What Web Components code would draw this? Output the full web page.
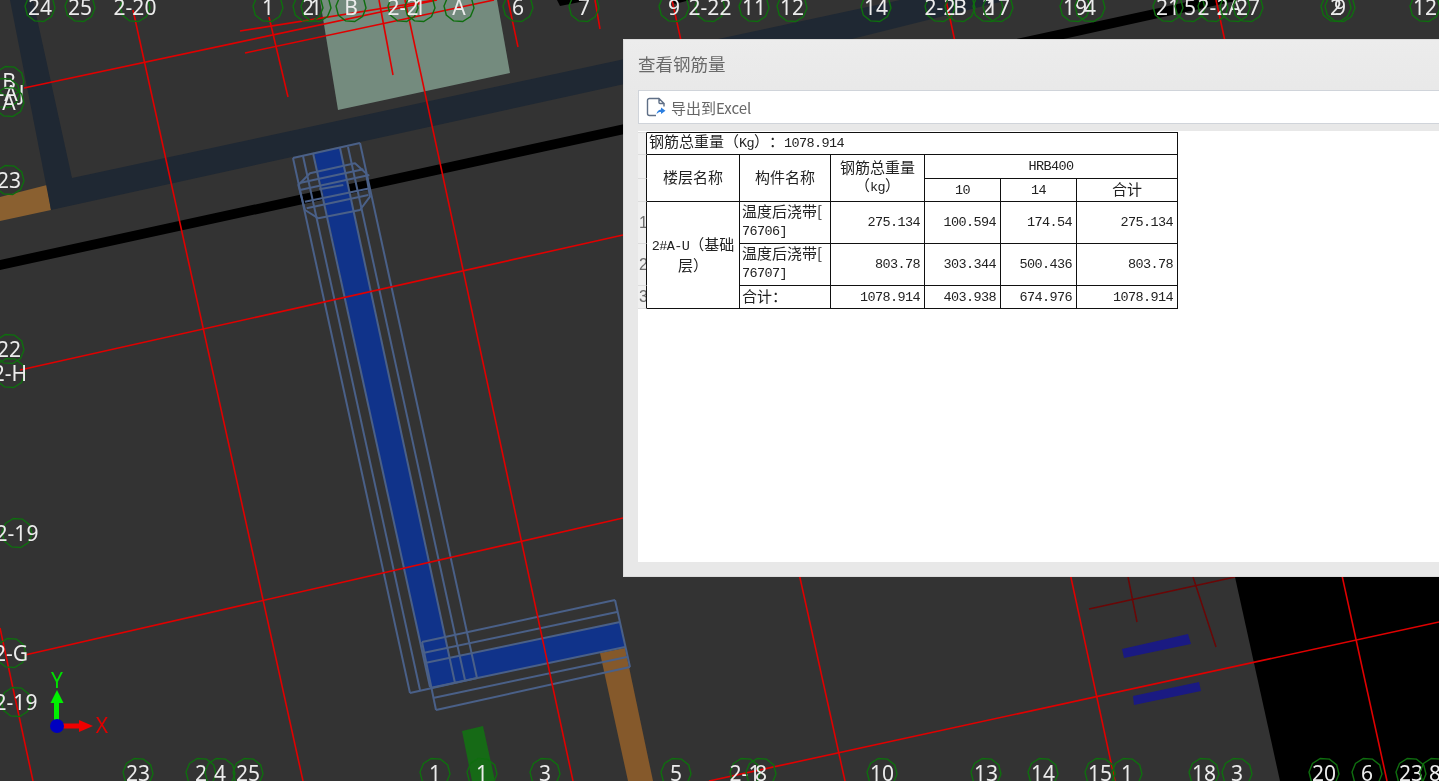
<!DOCTYPE html>
<html lang="zh">
<head>
<meta charset="utf-8">
<title>查看钢筋量</title>
<style>
    html, body { margin: 0; height: 100%; overflow: hidden; background: #333; }
</style>
</head>
<body>
<cad-view>
    <rebar-dialog heading="查看钢筋量">
        <export-button slot="toolbar">导出到Excel</export-button>
        <rebar-table></rebar-table>
    </rebar-dialog>
</cad-view>

<script>
const axisTagTemplate = document.createElement('template');
axisTagTemplate.innerHTML = `
    <style>
        :host {
            position: absolute;
            display: flex;
            align-items: center;
            justify-content: center;
            width: 30px;
            height: 30px;
            margin: -15px 0 0 -15px;
            color: #ececec;
            font: 21px/30px "Noto Sans", sans-serif;
            white-space: nowrap;
        }
        svg {
            position: absolute;
            inset: -1px;
            width: 32px;
            height: 32px;
        }
        span { position: relative; margin-top: -1px; }
    </style>
    <svg viewBox="-16 -16 32 32"><polygon fill="none" stroke="#0f6e0f" stroke-width="1.4"></polygon></svg>
    <span><slot></slot></span>
`;

class AxisTag extends HTMLElement {
    constructor() {
        super();
        this.attachShadow({ mode: 'open' });
        this.shadowRoot.appendChild(axisTagTemplate.content.cloneNode(true));
        const pts = [];
        for (let i = 0; i < 10; i++) {
            const a = (i + 0.5) * Math.PI / 5 - 0.25;
            pts.push((15 * Math.cos(a)).toFixed(1) + ',' + (15 * Math.sin(a)).toFixed(1));
        }
        this.shadowRoot.querySelector('polygon').setAttribute('points', pts.join(' '));
    }

    connectedCallback() {
        this.style.left = this.getAttribute('x') + 'px';
        this.style.top = this.getAttribute('y') + 'px';
    }
}
customElements.define('axis-tag', AxisTag);

const line = (x1, y1, x2, y2) => `<line x1="${x1}" y1="${y1}" x2="${x2}" y2="${y2}"/>`;

const redLines = [
    [133, 10, 303, 781], [0, 628, 33, 781], [405, 0, 573, 781], [672, 0, 845, 781],
    [946, 0, 1115, 781], [1216, 0, 1387, 781], [508, 0, 518, 47], [595, 0, 600, 29],
    [269, 17, 288, 97], [379, 0, 393, 75],
    [240, 31, 435, 0], [24, 88, 437, 0], [245, 53, 494, 0],
    [20, 370, 623, 235], [25, 655, 623, 518], [709, 781, 1439, 622]
].map(p => line(...p)).join('');

const dimLines = [
    [1089, 609, 1235, 577], [1128, 577, 1137, 622], [1193, 577, 1216, 647]
].map(p => line(...p)).join('');

const wireLines = [
    [293, 158, 360, 143], [293, 158, 410, 693], [303, 156, 420, 690], [313, 153, 430, 687],
    [340, 148, 455, 683], [348, 147, 465, 680], [360, 143, 477, 678], [410, 693, 477, 678],
    [422, 642, 615, 600], [423, 653, 617, 612], [425, 663, 620, 622], [430, 688, 625, 647],
    [433, 698, 627, 657], [436, 710, 630, 667], [615, 600, 630, 667], [422, 642, 436, 710]
].map(p => line(...p)).join('');

// cap rings round the top of the column, drawn in 3x crop units
const capLines = [
    [62, 158, 250, 118], [60, 180, 268, 135], [118, 178, 190, 165], [75, 215, 270, 175], [80, 235, 265, 195]
].map(p => line(...p)).join('');

const axisTags = [
    ['24', 40, 7], ['25', 80, 7], ['2-20', 135, 7], ['1', 268, 7], ['2', 308, 7], ['1', 316, 7],
    ['B', 351, 7], ['2-2', 403, 7], ['1', 420, 7], ['A', 459, 7], ['6', 518, 7], ['7', 584, 7],
    ['9', 674, 7], ['2-22', 710, 7], ['11', 754, 7], ['12', 792, 7], ['14', 876, 7], ['2-2', 940, 7],
    ['B', 960, 7], ['2', 988, 7], ['17', 998, 7], ['19', 1075, 7], ['4', 1090, 7], ['21', 1168, 7],
    ['5', 1190, 7], ['2-2', 1213, 7], ['A', 1235, 7], ['27', 1248, 7], ['2', 1336, 7], ['9', 1340, 7],
    ['12', 1425, 7],
    ['B', 9, 81], ['2-AJ', 5, 93], ['A', 9, 102], ['23', 9, 180], ['22', 9, 349], ['2-H', 10, 373],
    ['2-19', 17, 533], ['2-G', 11, 653], ['2-19', 16, 702],
    ['23', 138, 773], ['2', 201, 773], ['4', 220, 773], ['25', 248, 773], ['1', 435, 773],
    ['1', 482, 773], ['3', 545, 773], ['5', 676, 773], ['2-1', 745, 773], ['8', 761, 773],
    ['10', 882, 773], ['13', 986, 773], ['14', 1043, 773], ['15', 1100, 773], ['1', 1127, 773],
    ['18', 1204, 773], ['3', 1237, 773], ['20', 1324, 773], ['6', 1367, 773], ['23', 1411, 773],
    ['8', 1435, 773]
];

const cadViewTemplate = document.createElement('template');
cadViewTemplate.innerHTML = `
    <style>
        :host {
            position: absolute;
            inset: 0;
            display: block;
            overflow: hidden;
            background: #333;
        }
        svg.plan {
            position: absolute;
            inset: 0;
            width: 100%;
            height: 100%;
            filter: blur(.35px);
        }
        .tags { filter: blur(.35px); }
        .red { stroke: #e00000; stroke-width: 1.6; }
        .dim { stroke: #6b0606; stroke-width: 1.5; }
        .wire { stroke: #4a6088; stroke-width: 2; fill: none; stroke-linejoin: round; }
        text { font: 21px "Noto Sans", sans-serif; }
    </style>
    <svg class="plan" viewBox="0 0 1439 781">
        <polygon points="1235,577 1439,577 1439,781 1280,781" fill="#000"/>
        <polygon points="320,0 497,0 510,73 338,110" fill="#748b7e"/>
        <polygon points="0,197 47,185 51,210 0,221" fill="#8a6030"/>
        <polygon points="10,0 33,0 72,178 620,60 900,0 1008,0 848,40 620,85 51,210" fill="#1f2833"/>
        <polygon points="0,260 620,125 1012,40 1196,0 1240,0 1059,40 620,135 0,270" fill="#000"/>
        <polygon points="557,0 590,0 560,6" fill="#000"/>
        <polygon points="670,0 690,0 675,4" fill="#000"/>
        <polygon points="600,653 625,648 653,781 628,781" fill="#85592b"/>
        <polygon points="462,731 483,726 495,781 472,781" fill="#166a16"/>
        <polygon points="1122,649 1188,634 1191,644 1124,658" fill="#1a1a82"/>
        <polygon points="1133,696 1199,682 1201,691 1134,705" fill="#1a1a82"/>
        <polygon points="314,153 340,148 450,658 620,622 625,647 430,688" fill="#10338a"/>
        <g class="wire">${wireLines}</g>
        <g class="wire" transform="translate(280 130) scale(.3333)" style="stroke-width:6">
            <polygon points="55,165 90,130 225,100 258,130 270,200 240,240 115,265 75,240"/>
            ${capLines}
        </g>
        <g class="red">${redLines}</g>
        <g class="dim">${dimLines}</g>
        <rect x="54" y="703" width="5" height="20" fill="#00f000"/>
        <polygon points="57,690 63.500,703 50.500,703" fill="#00f000"/>
        <rect x="60" y="723.500" width="20" height="5" fill="#f00000"/>
        <polygon points="93,726 79,720 79,732" fill="#f00000"/>
        <circle cx="57" cy="726" r="7" fill="#0000c0"/>
        <text x="57" y="688" text-anchor="middle" fill="#00e000">Y</text>
        <text x="102" y="733" text-anchor="middle" fill="#e00000">X</text>
    </svg>
    <div class="tags"></div>
    <slot></slot>
`;

class CadView extends HTMLElement {
    constructor() {
        super();
        this.attachShadow({ mode: 'open' });
        this.shadowRoot.appendChild(cadViewTemplate.content.cloneNode(true));
        const tags = this.shadowRoot.querySelector('.tags');
        axisTags.forEach(([label, x, y]) => {
            const tag = document.createElement('axis-tag');
            tag.setAttribute('x', x);
            tag.setAttribute('y', y);
            tag.textContent = label;
            tags.appendChild(tag);
        });
    }
}
customElements.define('cad-view', CadView);

const dialogTemplate = document.createElement('template');
dialogTemplate.innerHTML = `
    <style>
        :host {
            position: absolute;
            left: 623px;
            top: 39px;
            width: 840px;
            height: 538px;
            box-sizing: border-box;
            display: flex;
            flex-direction: column;
            padding: 0 0 14px 14px;
            background: linear-gradient(#ececec, #e8e8e8 60px);
            border: 1px solid #dcdcdc;
            border-right: 0;
            filter: blur(.35px);
        }
        .title {
            height: 50px;
            font: 17.5px/48px "Noto Sans CJK SC", sans-serif;
            color: #6a6a6a;
            flex: none;
        }
        .toolbar {
            height: 34px;
            box-sizing: border-box;
            flex: none;
            display: flex;
            align-items: center;
            padding-left: 7px;
            background: #fff;
            border: 1px solid #d0d4da;
        }
        .sheet {
            flex: 1;
            margin-top: 7px;
            background: #fff;
            overflow: hidden;
        }
    </style>
    <div class="title"></div>
    <div class="toolbar"><slot name="toolbar"></slot></div>
    <div class="sheet"><slot></slot></div>
`;

class RebarDialog extends HTMLElement {
    constructor() {
        super();
        this.attachShadow({ mode: 'open' });
        this.shadowRoot.appendChild(dialogTemplate.content.cloneNode(true));
    }

    connectedCallback() {
        this.shadowRoot.querySelector('.title').textContent = this.getAttribute('heading');
    }
}
customElements.define('rebar-dialog', RebarDialog);

const exportTemplate = document.createElement('template');
exportTemplate.innerHTML = `
    <style>
        :host {
            display: inline-flex;
            align-items: center;
            gap: 5px;
            font: 15px "Noto Sans CJK SC", sans-serif;
            color: #666;
            cursor: pointer;
        }
        svg { width: 20px; height: 20px; display: block; }
    </style>
    <svg viewBox="0 0 20 20">
        <path d="M13 1.500H3.500a2 2 0 0 0-2 2v13a2 2 0 0 0 2 2H10" fill="none" stroke="#5f6f86" stroke-width="1.400"/>
        <path d="M13 1.500l5 5h-4a1 1 0 0 1-1-1z" fill="none" stroke="#5f6f86" stroke-width="1.400" stroke-linejoin="round"/>
        <path d="M18 6.500v3" fill="none" stroke="#5f6f86" stroke-width="1.400"/>
        <path d="M15 10.500l4.500 3.200-4.500 3.200v-1.900c-2 0-3.400.6-4.500 2.200.3-2.800 1.900-4.500 4.500-4.800z" fill="#2d7fe0"/>
    </svg>
    <span><slot></slot></span>
`;

class ExportButton extends HTMLElement {
    constructor() {
        super();
        this.attachShadow({ mode: 'open' });
        this.shadowRoot.appendChild(exportTemplate.content.cloneNode(true));
    }
}
customElements.define('export-button', ExportButton);

const tableTemplate = document.createElement('template');
tableTemplate.innerHTML = `
    <style>
        :host {
            display: block;
            padding-top: 1px;
            font: 15px/14px "Noto Sans CJK SC", sans-serif;
            color: #222;
            text-spacing-trim: space-all;
        }
        table {
            border-collapse: separate;
            border-spacing: 0;
            table-layout: fixed;
            width: 540px;
        }
        td {
            padding: 0 3px 2px;
            border-right: 1px solid #111;
            border-bottom: 1px solid #111;
            text-align: center;
            vertical-align: middle;
            overflow: hidden;
            white-space: nowrap;
            box-sizing: border-box;
        }
        tr:first-child td { border-top: 1px solid #111; }
        td.row-no {
            padding: 0 0 0 1px;
            background: #f0f0f0;
            border-bottom: 1px solid #dcdcdc;
            color: #6b6b6b;
            text-align: left;
            font: 16px/14px "Liberation Sans", sans-serif;
        }
        tr:first-child td.row-no { border-top: 1px solid #dcdcdc; }
        td.l { text-align: left; padding-left: 2px; }
        td.r { text-align: right; padding-right: 4px; }
        td.two { line-height: 18px; }
        .n { font-family: "Liberation Mono", monospace; font-size: 13.5px; letter-spacing: -.6px; }
    </style>
    <table>
        <colgroup>
            <col style="width:9px"><col style="width:93px"><col style="width:91px"><col style="width:94px">
            <col style="width:76px"><col style="width:76px"><col style="width:101px">
        </colgroup>
        <tr style="height:23px">
            <td class="row-no"></td>
            <td class="l" colspan="6">钢筋总重量（<span class="n">Kg</span>）：<span class="n">1078.914</span></td>
        </tr>
        <tr style="height:24px">
            <td class="row-no"></td>
            <td rowspan="2">楼层名称</td>
            <td rowspan="2">构件名称</td>
            <td class="two" rowspan="2">钢筋总重量<br>（<span class="n">kg</span>）</td>
            <td colspan="3"><span class="n">HRB400</span></td>
        </tr>
        <tr style="height:24px">
            <td class="row-no"></td>
            <td><span class="n">10</span></td>
            <td><span class="n">14</span></td>
            <td>合计</td>
        </tr>
        <tr style="height:41px">
            <td class="row-no">1</td>
            <td class="two" rowspan="3"><span class="n">2#A-U</span>（基础<br>层）</td>
            <td class="l two">温度后浇带[<br><span class="n">76706]</span></td>
            <td class="r"><span class="n">275.134</span></td>
            <td class="r"><span class="n">100.594</span></td>
            <td class="r"><span class="n">174.54</span></td>
            <td class="r"><span class="n">275.134</span></td>
        </tr>
        <tr style="height:42px">
            <td class="row-no">2</td>
            <td class="l two">温度后浇带[<br><span class="n">76707]</span></td>
            <td class="r"><span class="n">803.78</span></td>
            <td class="r"><span class="n">303.344</span></td>
            <td class="r"><span class="n">500.436</span></td>
            <td class="r"><span class="n">803.78</span></td>
        </tr>
        <tr style="height:23px">
            <td class="row-no">3</td>
            <td class="l">合计：</td>
            <td class="r"><span class="n">1078.914</span></td>
            <td class="r"><span class="n">403.938</span></td>
            <td class="r"><span class="n">674.976</span></td>
            <td class="r"><span class="n">1078.914</span></td>
        </tr>
    </table>
`;

class RebarTable extends HTMLElement {
    constructor() {
        super();
        this.attachShadow({ mode: 'open' });
        this.shadowRoot.appendChild(tableTemplate.content.cloneNode(true));
    }
}
customElements.define('rebar-table', RebarTable);

const rebarRows = document.querySelector('rebar-table').shadowRoot.querySelectorAll('tr');
[23, 24, 23, 41, 42, 23].forEach((h, i) => { rebarRows[i].style.height = h + 'px'; });
</script>
</body>
</html>
